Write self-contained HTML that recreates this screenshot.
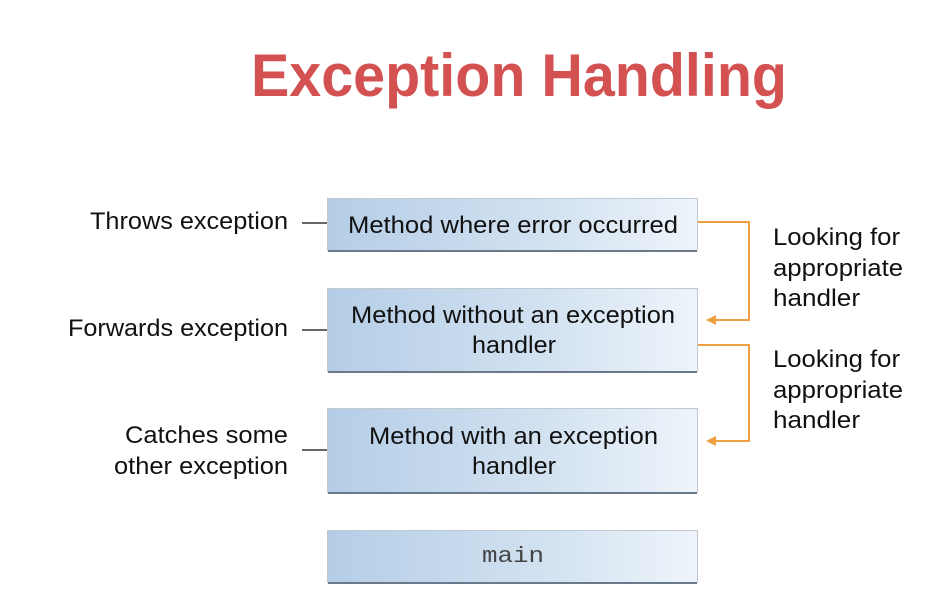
<!DOCTYPE html>
<html><head><style>
html,body{margin:0;padding:0;background:#fff;width:951px;height:599px;overflow:hidden}
</style></head><body>
<svg width="951" height="599" xmlns="http://www.w3.org/2000/svg" font-family="Liberation Sans, sans-serif">
<defs>
<linearGradient id="g" x1="0" x2="1" y1="0" y2="0">
<stop offset="0" stop-color="#b4cde6"/><stop offset="0.6" stop-color="#d3e2f1"/><stop offset="1" stop-color="#eef4fa"/>
</linearGradient>
</defs>
<text x="251" y="96" font-size="60" font-weight="bold" fill="#d45151" textLength="536" lengthAdjust="spacingAndGlyphs">Exception Handling</text>
<g stroke="#c0c8d0" stroke-width="1">
<rect x="327.5" y="198.5" width="370" height="52" fill="url(#g)"/>
<rect x="327.5" y="288.5" width="370" height="83" fill="url(#g)"/>
<rect x="327.5" y="408.5" width="370" height="84" fill="url(#g)"/>
<rect x="327.5" y="530.5" width="370" height="52" fill="url(#g)"/>
</g>
<g stroke="#6a7a8a" stroke-width="2">
<line x1="328" y1="251" x2="697" y2="251"/><line x1="328" y1="372" x2="697" y2="372"/>
<line x1="328" y1="493" x2="697" y2="493"/><line x1="328" y1="583" x2="697" y2="583"/>
</g>
<g stroke="#333" stroke-width="1.5">
<line x1="302" y1="223" x2="327" y2="223"/><line x1="302" y1="330" x2="327" y2="330"/><line x1="302" y1="450" x2="327" y2="450"/>
</g>
<g fill="none" stroke="#eea040" stroke-width="2">
<polyline points="698,222 749,222 749,320 712,320"/>
<polyline points="698,345 749,345 749,441 712,441"/>
</g>
<g fill="#eea040"><polygon points="706,320 716,315 716,325"/><polygon points="706,441 716,436 716,446"/></g>
<g font-size="24" fill="#111">
<text x="348" y="233" textLength="330" lengthAdjust="spacingAndGlyphs">Method where error occurred</text>
<text x="351" y="323" textLength="324" lengthAdjust="spacingAndGlyphs">Method without an exception</text>
<text x="472" y="353" textLength="84" lengthAdjust="spacingAndGlyphs">handler</text>
<text x="369" y="444" textLength="289" lengthAdjust="spacingAndGlyphs">Method with an exception</text>
<text x="472" y="474" textLength="84" lengthAdjust="spacingAndGlyphs">handler</text>
<text x="482" y="562" font-size="22" font-family="Liberation Mono, monospace" fill="#444" textLength="62" lengthAdjust="spacingAndGlyphs">main</text>
<text x="90" y="229" textLength="198" lengthAdjust="spacingAndGlyphs">Throws exception</text>
<text x="68" y="336" textLength="220" lengthAdjust="spacingAndGlyphs">Forwards exception</text>
<text x="125" y="443" textLength="163" lengthAdjust="spacingAndGlyphs">Catches some</text>
<text x="114" y="474" textLength="174" lengthAdjust="spacingAndGlyphs">other exception</text>
<text x="773" y="245" textLength="127" lengthAdjust="spacingAndGlyphs">Looking for</text>
<text x="773" y="276" textLength="130" lengthAdjust="spacingAndGlyphs">appropriate</text>
<text x="773" y="306" textLength="87" lengthAdjust="spacingAndGlyphs">handler</text>
<text x="773" y="367" textLength="127" lengthAdjust="spacingAndGlyphs">Looking for</text>
<text x="773" y="398" textLength="130" lengthAdjust="spacingAndGlyphs">appropriate</text>
<text x="773" y="428" textLength="87" lengthAdjust="spacingAndGlyphs">handler</text>
</g>
</svg>
</body></html>
